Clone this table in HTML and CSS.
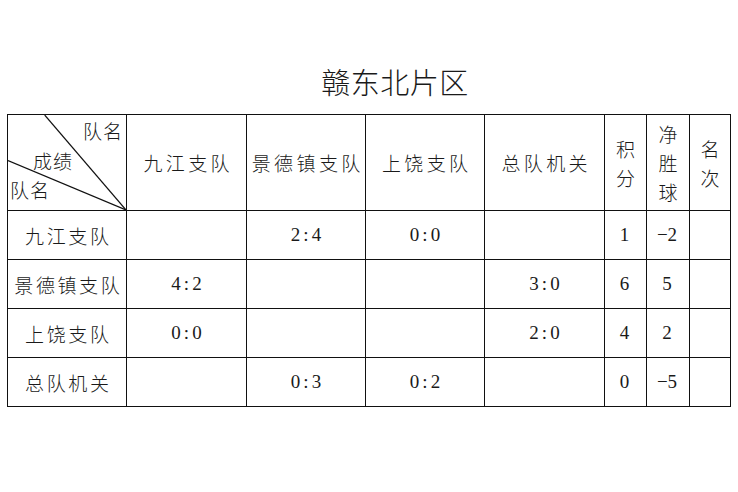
FILE: index.html
```html
<!DOCTYPE html>
<html lang="zh">
<head>
<meta charset="utf-8">
<link rel="stylesheet" href="styles.css">
</head>
<body>
<div class="page">
  <h1 class="title">赣东北片区</h1>
  <table class="grid">
    <colgroup>
      <col class="c-team"><col class="c-w"><col class="c-w2"><col class="c-w2"><col class="c-w">
      <col class="c-n1"><col class="c-n2"><col class="c-n3">
    </colgroup>
    <tr class="head">
      <th class="diag">
        <svg class="diag-lines" viewBox="0 0 119 96" preserveAspectRatio="none">
          <line x1="37" y1="0" x2="119" y2="96" stroke="#111" stroke-width="1.2"/>
          <line x1="0" y1="46" x2="119" y2="96" stroke="#111" stroke-width="1.2"/>
        </svg>
        <span class="d-top">队名</span>
        <span class="d-mid">成绩</span>
        <span class="d-bot">队名</span>
      </th>
      <th>九江支队</th>
      <th>景德镇支队</th>
      <th>上饶支队</th>
      <th>总队机关</th>
      <th class="stack">积<br>分</th>
      <th class="stack">净<br>胜<br>球</th>
      <th class="stack">名<br>次</th>
    </tr>
    <tr><td class="team">九江支队</td><td></td><td class="num">2:4</td><td class="num">0:0</td><td></td><td class="stat">1</td><td class="stat">−2</td><td></td></tr>
    <tr><td class="team">景德镇支队</td><td class="num">4:2</td><td></td><td></td><td class="num">3:0</td><td class="stat">6</td><td class="stat">5</td><td></td></tr>
    <tr><td class="team">上饶支队</td><td class="num">0:0</td><td></td><td></td><td class="num">2:0</td><td class="stat">4</td><td class="stat">2</td><td></td></tr>
    <tr><td class="team">总队机关</td><td></td><td class="num">0:3</td><td class="num">0:2</td><td></td><td class="stat">0</td><td class="stat">−5</td><td></td></tr>
  </table>
</div>
</body>
</html>
```

FILE: styles.css
```css
html, body {
  margin: 0;
  padding: 0;
  background: #fff;
}
.page {
  padding: 64px 0 0 7px;
  font-family: "Noto Sans CJK SC", "Liberation Serif", sans-serif;
  color: #1a1a1a;
}
.title {
  margin: 0 0 16px 0;
  padding-left: 52px;
  width: 672px;
  text-align: center;
  font-weight: 300;
  font-size: 29px;
  line-height: 34px;
  letter-spacing: 0.5px;
}
.grid {
  border-collapse: collapse;
  table-layout: fixed;
  width: 724px;
}
.c-team { width: 119px; }
.c-w { width: 120px; }
.c-w2 { width: 119px; }
.c-n1 { width: 42px; }
.c-n2 { width: 43px; }
.c-n3 { width: 41px; }
.grid th, .grid td {
  border: 1px solid #111;
  padding: 0;
  text-align: center;
  vertical-align: middle;
  font-weight: 300;
  font-size: 19px;
  letter-spacing: 3.4px;
  text-indent: 3.4px;
  white-space: nowrap;
}
.grid tr { height: 49px; }
.grid tr.head { height: 96px; }
.stack {
  line-height: 29px;
}
.grid th.stack {
  letter-spacing: 0;
  text-indent: 0;
  white-space: normal;
}
.num, .stat {
  font-family: "Liberation Serif", "Noto Sans CJK SC", serif;
  font-size: 20px;
}
.grid td.num {
  letter-spacing: 3px;
  text-indent: 3px;
}
.grid td.stat {
  letter-spacing: 0;
  text-indent: 0;
  padding-right: 2px;
}
.grid td.team {
  letter-spacing: 2.6px;
  text-indent: 2.6px;
}
.diag {
  position: relative;
}
.diag-lines {
  position: absolute;
  left: 0;
  top: 0;
  width: 100%;
  height: 100%;
}
.grid th.diag span {
  position: absolute;
  font-size: 19px;
  line-height: 22px;
  letter-spacing: 1px;
  text-indent: 0;
}
.d-top { right: 3px; top: 5px; }
.d-mid { left: 25px; top: 35px; }
.d-bot { left: 2px; top: 64px; }
```
